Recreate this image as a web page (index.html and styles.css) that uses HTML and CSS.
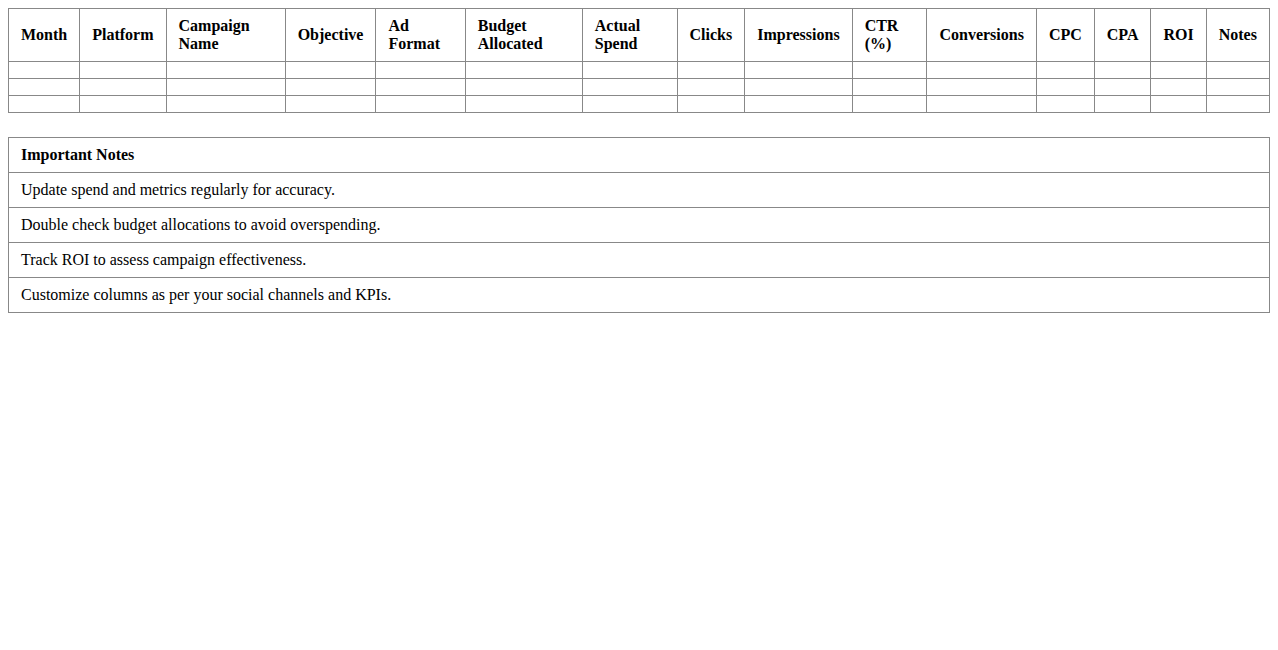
FILE: index.html
```html
<!DOCTYPE html>
<html>
<head>
<meta charset="utf-8">
<link rel="stylesheet" href="styles.css">
</head>
<body>
<table class="tracker">
  <thead>
    <tr>
      <th>Month</th><th>Platform</th><th>Campaign Name</th><th>Objective</th><th>Ad Format</th><th>Budget Allocated</th><th>Actual Spend</th><th>Clicks</th><th>Impressions</th><th>CTR (%)</th><th>Conversions</th><th>CPC</th><th>CPA</th><th>ROI</th><th>Notes</th>
    </tr>
  </thead>
  <tbody>
    <tr><td></td><td></td><td></td><td></td><td></td><td></td><td></td><td></td><td></td><td></td><td></td><td></td><td></td><td></td><td></td></tr>
    <tr><td></td><td></td><td></td><td></td><td></td><td></td><td></td><td></td><td></td><td></td><td></td><td></td><td></td><td></td><td></td></tr>
    <tr><td></td><td></td><td></td><td></td><td></td><td></td><td></td><td></td><td></td><td></td><td></td><td></td><td></td><td></td><td></td></tr>
  </tbody>
</table>
<table class="notes">
  <tr><th>Important Notes</th></tr>
  <tr><td>Update spend and metrics regularly for accuracy.</td></tr>
  <tr><td>Double check budget allocations to avoid overspending.</td></tr>
  <tr><td>Track ROI to assess campaign effectiveness.</td></tr>
  <tr><td>Customize columns as per your social channels and KPIs.</td></tr>
</table>
</body>
</html>
```
FILE: styles.css
```css
body {
  margin: 8px;
  font-family: "Liberation Serif", "Times New Roman", serif;
  font-size: 16px;
  color: #000;
  background: #fff;
}
table {
  width: 100%;
  border-collapse: collapse;
}
th, td {
  border: 1px solid #888;
  padding: 8px 12px;
  line-height: 18px;
  text-align: left;
}
th {
  font-weight: bold;
}
.tracker {
  margin-bottom: 24px;
}
```
